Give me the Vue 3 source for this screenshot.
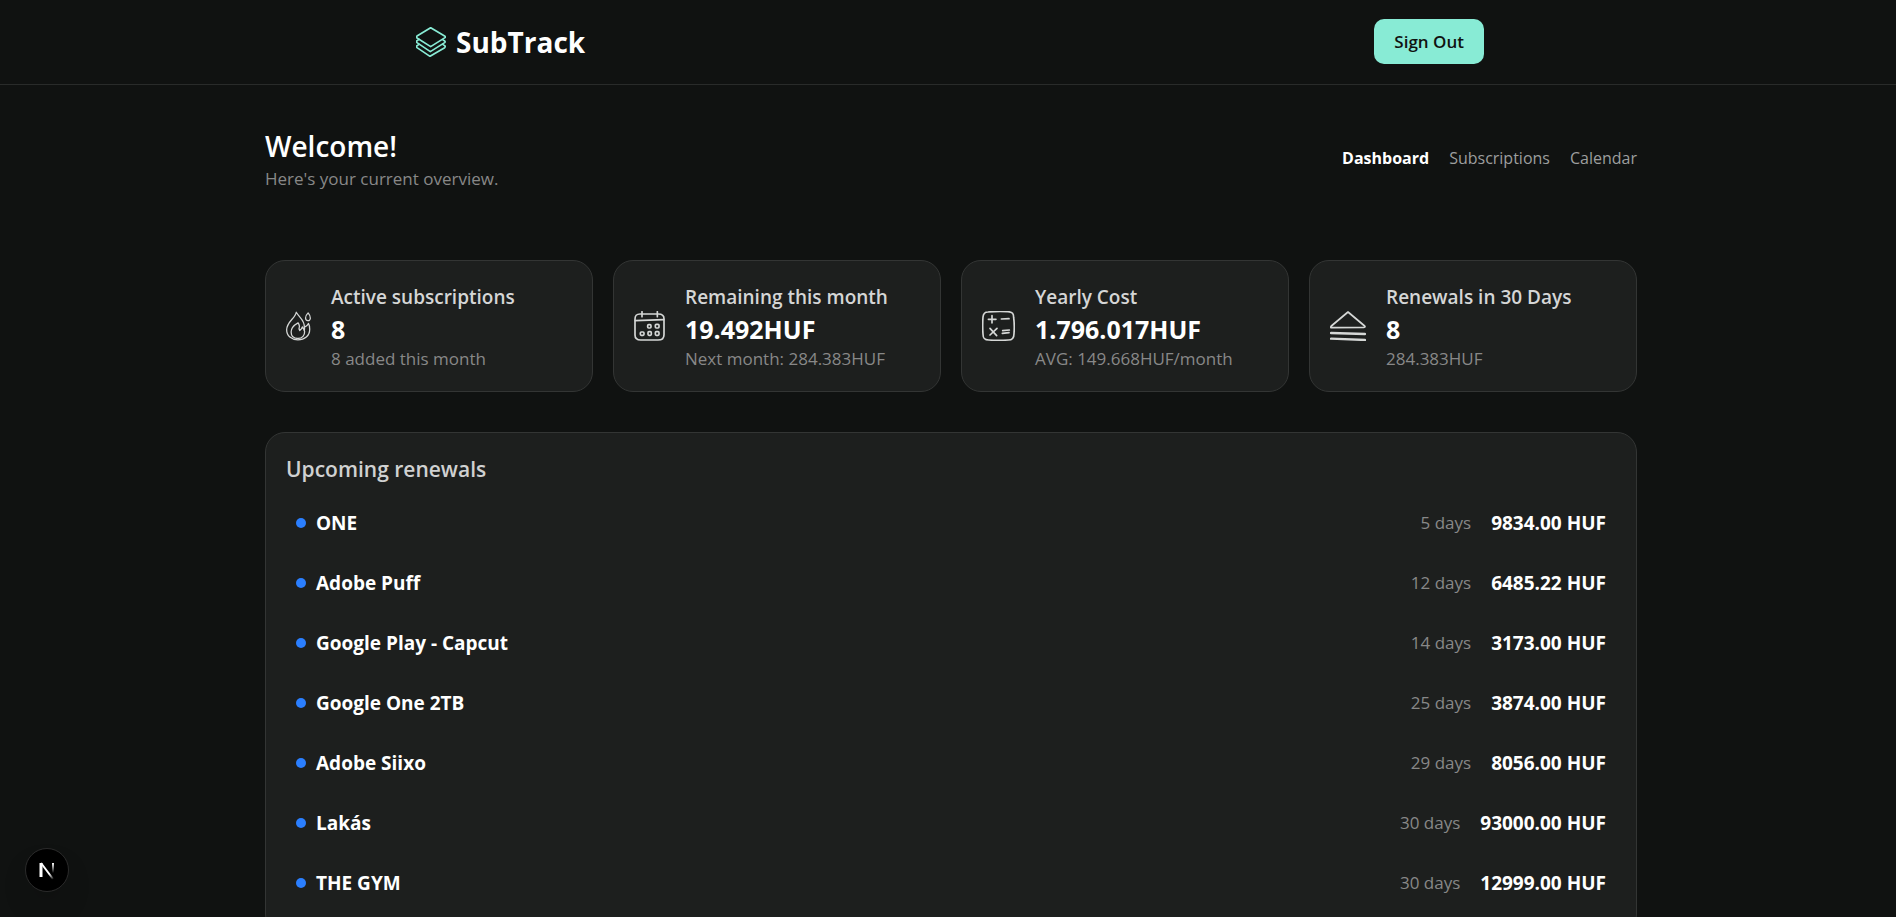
<script setup>
const stats = [
  { icon: 'flame', title: 'Active subscriptions', value: '8', note: '8 added this month' },
  { icon: 'calendar', title: 'Remaining this month', value: '19.492HUF', note: 'Next month: 284.383HUF' },
  { icon: 'calculator', title: 'Yearly Cost', value: '1.796.017HUF', note: 'AVG: 149.668HUF/month' },
  { icon: 'stack', title: 'Renewals in 30 Days', value: '8', note: '284.383HUF' },
]

const navLinks = [
  { label: 'Dashboard', active: true },
  { label: 'Subscriptions', active: false },
  { label: 'Calendar', active: false },
]

const renewals = [
  { name: 'ONE', days: 5, price: '9834.00' },
  { name: 'Adobe Puff', days: 12, price: '6485.22' },
  { name: 'Google Play - Capcut', days: 14, price: '3173.00' },
  { name: 'Google One 2TB', days: 25, price: '3874.00' },
  { name: 'Adobe Siixo', days: 29, price: '8056.00' },
  { name: 'Lakás', days: 30, price: '93000.00' },
  { name: 'THE GYM', days: 30, price: '12999.00' },
]
</script>

<template>
  <div class="page">
    <header class="topbar">
      <div class="topbar-inner">
        <a class="brand" href="#">
          <svg class="brand-icon" viewBox="0 0 90 90" aria-hidden="true">
            <path d="M44 2 87 28Q89 30 87 32L44 59 3 33Q0 30 3 27Z" />
            <path d="M9 37 2 42Q1 45 3 47L43 74 86 47Q89 44 86 42L80 38" />
            <path d="M9 52 2 57Q1 60 3 62L42 88 86 62Q89 59 86 56L80 52" />
          </svg>
          <span>SubTrack</span>
        </a>
        <button class="sign-out" type="button">Sign Out</button>
      </div>
    </header>

    <main class="content">
      <div class="intro">
        <div>
          <h1>Welcome!</h1>
          <p>Here's your current overview.</p>
        </div>
        <nav>
          <a v-for="link in navLinks" :key="link.label" href="#" :class="{ active: link.active }">{{ link.label }}</a>
        </nav>
      </div>

      <section class="stats">
        <article v-for="stat in stats" :key="stat.title" class="card stat">
          <svg v-if="stat.icon === 'flame'" class="icon flame" viewBox="0 0 78 90" aria-hidden="true">
            <path d="M32 2C30 20 2 32 2 57C2 76 17 88 37 88C58 88 74 76 74 55Q74 44 70 37Q66 46 57 49C60 29 43 20 32 2Z" />
            <path d="M38 35C31 39 16 46 16 64C16 77 25 84 37 84C51 84 59 74 58 62Q57 55 51 48Q49 55 43 59Q39 54 42 46Q41 39 38 35Z" />
            <path d="M69 4Q61 12 61 20C61 30 75 32 76 21Q76 12 69 4Z" />
            <path d="M57 50Q59 54 57 59" />
          </svg>
          <svg v-else-if="stat.icon === 'calendar'" class="icon calendar" viewBox="0 0 93 90" aria-hidden="true">
            <path d="M18 9C7 9 3 13 3 25V72C3 83 8 87 20 87H72C85 87 90 82 90 71V23C90 13 85 9 73 9Z" />
            <path d="M4 29 89 26M24 2V17M70 2V17" />
            <rect x="41" y="41" width="10" height="10" rx="3" />
            <rect x="64" y="40" width="11" height="11" rx="3" />
            <rect x="19" y="63" width="11" height="10" rx="3" />
            <rect x="42" y="62" width="10" height="11" rx="3" />
            <rect x="64" y="62" width="11" height="11" rx="3" />
          </svg>
          <svg v-else-if="stat.icon === 'calculator'" class="icon calculator" viewBox="0 0 99 90" aria-hidden="true">
            <path d="M18 3Q48 0 78 2C92 3 95 8 95 20Q98 42 96 68C96 82 91 87 79 87Q48 89 20 87C7 87 3 82 3 69Q1 43 3 18C4 7 8 3 18 3Z" />
            <path d="M30 14V36M19 25H42M58 24 81 23M24 52 44 74M45 52 24 72M62 59 82 57M61 67 81 65" />
          </svg>
          <svg v-else class="icon stack" viewBox="0 0 108 90" aria-hidden="true">
            <path d="M54 3 104 45Q107 49 102 49L5 50Q0 50 4 45Z" />
            <path d="M3 66 105 69M3 83 105 87" class="bold" />
          </svg>
          <div class="stat-text">
            <h2>{{ stat.title }}</h2>
            <strong>{{ stat.value }}</strong>
            <p>{{ stat.note }}</p>
          </div>
        </article>
      </section>

      <section class="card renewals">
        <h2>Upcoming renewals</h2>
        <ul>
          <li v-for="item in renewals" :key="item.name">
            <span class="dot"></span>
            <span class="name">{{ item.name }}</span>
            <span class="days">{{ item.days }} days</span>
            <span class="price">{{ item.price }} HUF</span>
          </li>
        </ul>
      </section>
    </main>

    <button class="dev-badge" type="button" aria-label="Open Next.js Dev Tools">
      <svg viewBox="0 0 20 20" aria-hidden="true">
        <defs>
          <linearGradient id="fade-diagonal" gradientUnits="userSpaceOnUse" x1="10" y1="10" x2="17" y2="19">
            <stop offset="0.4" stop-color="#fff" />
            <stop offset="1" stop-color="#fff" stop-opacity="0" />
          </linearGradient>
          <linearGradient id="fade-stem" gradientUnits="userSpaceOnUse" x1="16" y1="3" x2="16" y2="13">
            <stop offset="0" stop-color="#fff" />
            <stop offset="1" stop-color="#fff" stop-opacity="0" />
          </linearGradient>
        </defs>
        <path d="M4 17V3" stroke="#fff" stroke-width="3" />
        <path d="M4 3 16 19" stroke="url(#fade-diagonal)" stroke-width="2" />
        <path d="M16 3V13" stroke="url(#fade-stem)" stroke-width="2" />
      </svg>
    </button>
  </div>
</template>

<style>
body {
  background: #101211;
}
</style>

<style scoped>
.page {
  height: 100vh;
  overflow: hidden;
  background: #101211;
  color: #fff;
  font-family: 'Segoe UI', 'Open Sans', 'Noto Sans', sans-serif;
  font-size: 17px;
}

h1,
h2,
p,
ul {
  margin: 0;
  padding: 0;
}

a {
  color: inherit;
  text-decoration: none;
}

.topbar {
  padding: 19px 20px 20px;
  border-bottom: 1px solid #292b2a;
}

.topbar-inner {
  display: flex;
  align-items: center;
  justify-content: space-between;
  max-width: 1072px;
  margin: 0 auto;
}

.brand {
  display: flex;
  align-items: center;
  gap: 10px;
  padding-left: 4px;
  font-size: 28px;
  line-height: 44px;
  font-weight: 700;
}

.brand-icon {
  width: 30px;
  height: 30px;
  fill: none;
  stroke: #88ebd5;
  stroke-width: 5;
  stroke-linejoin: round;
  stroke-linecap: round;
}

.sign-out {
  padding: 0 20px;
  border: 0;
  border-radius: 10px;
  background: #88ebd5;
  color: #101211;
  font: inherit;
  font-weight: 600;
  line-height: 45px;
}

.content {
  max-width: 1372px;
  margin: 0 auto;
  padding: 40px 0 0 6px;
}

.intro {
  display: flex;
  align-items: center;
  justify-content: space-between;
  padding-bottom: 69px;
}

.intro h1 {
  font-size: 28px;
  line-height: 42px;
  font-weight: 600;
}

.intro p {
  color: #888;
  line-height: 24px;
}

nav {
  display: flex;
  gap: 20px;
  color: #9d9e9e;
  font-size: 16px;
}

nav .active {
  color: #fff;
  font-weight: 700;
}

.card {
  border: 1px solid #333534;
  border-radius: 20px;
  background: #1d1f1e;
}

.stats {
  display: grid;
  grid-template-columns: repeat(4, 1fr);
  gap: 20px;
}

.stat {
  display: flex;
  align-items: center;
  gap: 20px;
  padding: 19px 20px;
}

.icon {
  flex: none;
  height: 30px;
  fill: none;
  stroke: #d5d7d6;
  stroke-width: 5;
  stroke-linejoin: round;
  stroke-linecap: round;
}

.flame {
  width: 25px;
  stroke-width: 4;
}

.calendar {
  width: 31px;
}

.calculator {
  width: 33px;
}

.stack {
  width: 36px;
}

.bold {
  stroke-width: 7;
}

.stat-text {
  padding-top: 2px;
}

.stat-text h2 {
  color: #d5d6d6;
  font-size: 19px;
  line-height: 30px;
  font-weight: 600;
}

.stat-text strong {
  display: block;
  font-size: 25px;
  line-height: 34px;
  font-weight: 700;
}

.stat-text p {
  color: #888;
  line-height: 26px;
}

.renewals {
  margin-top: 40px;
  padding: 20px;
}

.renewals h2 {
  color: #d0d1d1;
  font-size: 21px;
  line-height: 32px;
  font-weight: 600;
}

.renewals ul {
  padding-top: 8px;
  list-style: none;
}

.renewals li {
  display: flex;
  align-items: center;
  padding: 10px;
  line-height: 40px;
}

.dot {
  width: 10px;
  height: 10px;
  margin-right: 10px;
  border-radius: 50%;
  background: #2b7fff;
}

.name,
.price {
  font-size: 19px;
  font-weight: 700;
}

.days {
  margin: 0 20px 0 auto;
  color: #888;
}

.dev-badge {
  position: fixed;
  left: 25px;
  bottom: 25px;
  display: grid;
  place-items: center;
  width: 44px;
  height: 44px;
  padding: 0;
  border: 1px solid #2b2b2b;
  border-radius: 50%;
  background: #000;
  box-shadow: 0 16px 32px -8px rgba(0, 0, 0, 0.24);
}

.dev-badge svg {
  width: 20px;
  height: 20px;
  fill: none;
}
</style>
